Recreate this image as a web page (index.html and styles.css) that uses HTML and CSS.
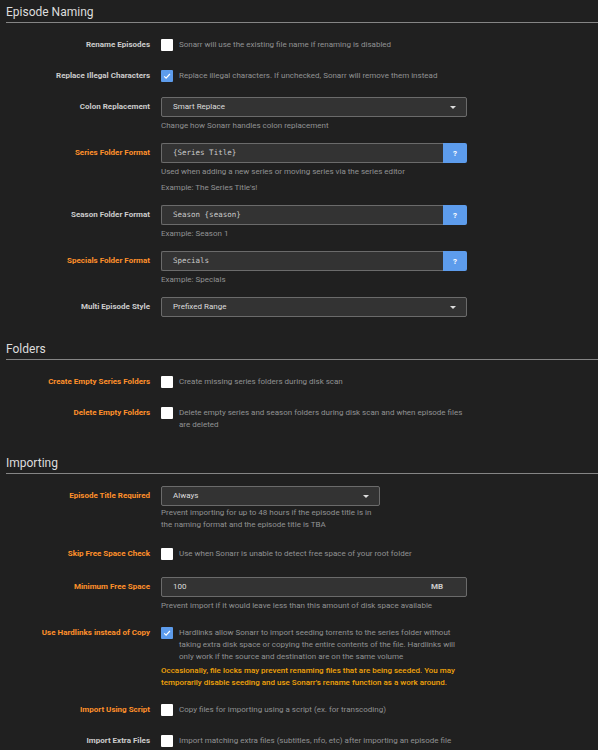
FILE: index.html
```html
<!DOCTYPE html>
<html lang="en">
<head>
  <meta charset="UTF-8" />
  <title>Media Management</title>
  <link rel="stylesheet" href="styles.css">
</head>
<body>
<div class="page">

  <div class="section">
    <h2 class="legend">Episode Naming</h2>

    <div class="group">
      <label class="label">Rename Episodes</label>
      <div class="control">
        <div class="check-row"><span class="box"></span><span class="check-text">Sonarr will use the existing file name if renaming is disabled</span></div>
      </div>
    </div>

    <div class="group">
      <label class="label">Replace Illegal Characters</label>
      <div class="control">
        <div class="check-row"><span class="box checked"><svg viewBox="0 0 12 12"><path d="M3.2 6.3l1.9 1.9 3.8-4.2" /></svg></span><span class="check-text">Replace illegal characters. If unchecked, Sonarr will remove them instead</span></div>
      </div>
    </div>

    <div class="group">
      <label class="label">Colon Replacement</label>
      <div class="control">
        <div class="select">Smart Replace<span class="caret"></span></div>
        <div class="help">Change how Sonarr handles colon replacement</div>
      </div>
    </div>

    <div class="group">
      <label class="label adv">Series Folder Format</label>
      <div class="control">
        <div class="input-group"><div class="input mono">{Series Title}</div><button class="help-btn">?</button></div>
        <div class="help">Used when adding a new series or moving series via the series editor</div>
        <div class="help">Example: The Series Title's!</div>
      </div>
    </div>

    <div class="group">
      <label class="label">Season Folder Format</label>
      <div class="control">
        <div class="input-group"><div class="input mono">Season {season}</div><button class="help-btn">?</button></div>
        <div class="help">Example: Season 1</div>
      </div>
    </div>

    <div class="group">
      <label class="label adv">Specials Folder Format</label>
      <div class="control">
        <div class="input-group"><div class="input mono">Specials</div><button class="help-btn">?</button></div>
        <div class="help">Example: Specials</div>
      </div>
    </div>

    <div class="group">
      <label class="label">Multi Episode Style</label>
      <div class="control">
        <div class="select">Prefixed Range<span class="caret"></span></div>
      </div>
    </div>
  </div>

  <div class="section">
    <h2 class="legend">Folders</h2>

    <div class="group">
      <label class="label adv">Create Empty Series Folders</label>
      <div class="control">
        <div class="check-row"><span class="box"></span><span class="check-text">Create missing series folders during disk scan</span></div>
      </div>
    </div>

    <div class="group">
      <label class="label adv">Delete Empty Folders</label>
      <div class="control">
        <div class="check-row"><span class="box"></span><span class="check-text">Delete empty series and season folders during disk scan and when episode files are deleted</span></div>
      </div>
    </div>
  </div>

  <div class="section">
    <h2 class="legend">Importing</h2>

    <div class="group">
      <label class="label adv">Episode Title Required</label>
      <div class="control narrow">
        <div class="select">Always<span class="caret"></span></div>
        <div class="help tight">Prevent importing for up to 48 hours if the episode title is in the naming format and the episode title is TBA</div>
      </div>
    </div>

    <div class="group roomy">
      <label class="label adv">Skip Free Space Check</label>
      <div class="control">
        <div class="check-row"><span class="box"></span><span class="check-text">Use when Sonarr is unable to detect free space of your root folder</span></div>
      </div>
    </div>

    <div class="group">
      <label class="label adv">Minimum Free Space</label>
      <div class="control">
        <div class="input unit">100<span class="unit-label">MB</span></div>
        <div class="help">Prevent import if it would leave less than this amount of disk space available</div>
      </div>
    </div>

    <div class="group">
      <label class="label adv">Use Hardlinks instead of Copy</label>
      <div class="control">
        <div class="check-row"><span class="box checked"><svg viewBox="0 0 12 12"><path d="M3.2 6.3l1.9 1.9 3.8-4.2" /></svg></span><span class="check-text">Hardlinks allow Sonarr to import seeding torrents to the series folder without taking extra disk space or copying the entire contents of the file. Hardlinks will only work if the source and destination are on the same volume</span></div>
        <div class="warning">Occasionally, file locks may prevent renaming files that are being seeded. You may temporarily disable seeding and use Sonarr's rename function as a work around.</div>
      </div>
    </div>

    <div class="group">
      <label class="label adv">Import Using Script</label>
      <div class="control">
        <div class="check-row"><span class="box"></span><span class="check-text">Copy files for importing using a script (ex. for transcoding)</span></div>
      </div>
    </div>

    <div class="group">
      <label class="label">Import Extra Files</label>
      <div class="control">
        <div class="check-row"><span class="box"></span><span class="check-text">Import matching extra files (subtitles, nfo, etc) after importing an episode file</span></div>
      </div>
    </div>
  </div>

</div>
</body>
</html>
```

FILE: styles.css
```css
html, body { margin: 0; background: #202020; }
body { font-family: Roboto, "Liberation Sans", sans-serif; color: #ccc; font-size: 8px; }
.page { padding-left: 6px; overflow: hidden; height: 750px; }

/* group margin (11px) collapses into this */
.section { margin-bottom: 20px; }
.legend { margin: 0 0 12px 0; height: 22px; line-height: 24px; font-size: 12px; font-weight: 400; color: #ddd; border-bottom: 1px solid #858585; }

.group { display: flex; align-items: flex-start; margin-bottom: 11px; }
.group.roomy { margin-bottom: 13px; }
.label { flex: 0 0 144px; text-align: right; line-height: 20px; font-weight: 700; color: #ccc; }
.label.adv { color: #ff902b; }
.control { width: 306px; margin-left: 11px; }
.control.narrow { width: 219px; }

.check-row { display: flex; align-items: flex-start; min-height: 20px; }
.box { flex: 0 0 12px; width: 12px; height: 12px; margin-top: 4px; background: #fff; border-radius: 1px; box-sizing: border-box; }
.box.checked { background: #5d9cec; }
.box svg { display: block; width: 12px; height: 12px; fill: none; stroke: #fff; stroke-width: 1.2; }
.check-text { margin-left: 6px; padding-top: 4px; line-height: 12px; color: #909293; }

.select, .input { position: relative; box-sizing: border-box; height: 20px; line-height: 18px; padding: 0 11px; background: #333; border: 1px solid #6b6b6b; border-radius: 2px; color: #ddd; }
.caret { position: absolute; right: 10px; top: 8px; width: 0; height: 0; border-left: 3px solid transparent; border-right: 3px solid transparent; border-top: 3px solid #ddd; }

.input-group { display: flex; }
.input-group .input { flex: 1; border-radius: 2px 0 0 2px; border-right: none; }
.mono { font-family: "DejaVu Sans Mono", "Liberation Mono", monospace; font-size: 7.5px; color: #ccc; }
.help-btn { flex: 0 0 24px; height: 20px; padding: 0; border: none; border-radius: 0 2px 2px 0; background: #5d9cec; color: #fff; font-family: Roboto, sans-serif; font-weight: 700; font-size: 8px; }

.unit-label { position: absolute; right: 23px; top: 0; font-weight: 700; color: #ccc; }

.help { margin-top: 3px; line-height: 12px; color: #909293; }
.help.tight { margin-top: 1px; margin-bottom: 2px; }
.help + .help { margin-top: 4px; }
.warning { margin-top: 2px; line-height: 12px; color: #f0a30a; font-weight: 500; }
```
